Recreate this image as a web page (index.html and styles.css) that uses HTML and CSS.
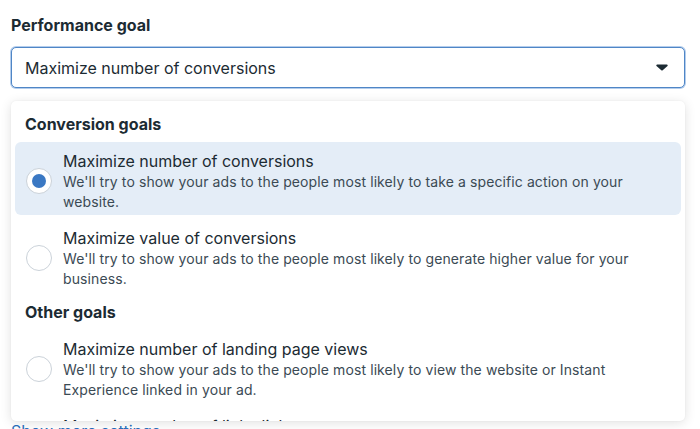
FILE: index.html
```html
<!DOCTYPE html>
<html lang="en">
<head>
<meta charset="utf-8">
<title>Performance goal</title>
<link rel="stylesheet" href="styles.css">
</head>
<body>
<div class="page">
  <div class="label">Performance goal</div>
  <div class="field">
    <div class="select">
      <span class="select-value">Maximize number of conversions</span>
      <svg class="caret" width="12" height="7" viewBox="0 0 12 7"><path d="M1.2 0.5h9.6c0.8 0 1.2 0.9 0.7 1.5L6.7 6.3c-0.4 0.4-1 0.4-1.4 0L0.5 2C0 1.4 0.4 0.5 1.2 0.5z" fill="#1c2b33"/></svg>
    </div>
    <div class="menu">
      <div class="group-title">Conversion goals</div>
      <div class="option selected">
        <span class="radio"><span class="dot"></span></span>
        <div class="option-text">
          <div class="option-title">Maximize number of conversions</div>
          <div class="option-desc">We'll try to show your ads to the people most likely to take a specific action on your website.</div>
        </div>
      </div>
      <div class="option">
        <span class="radio"></span>
        <div class="option-text">
          <div class="option-title">Maximize value of conversions</div>
          <div class="option-desc">We'll try to show your ads to the people most likely to generate higher value for your business.</div>
        </div>
      </div>
      <div class="group-title">Other goals</div>
      <div class="option">
        <span class="radio"></span>
        <div class="option-text">
          <div class="option-title">Maximize number of landing page views</div>
          <div class="option-desc">We'll try to show your ads to the people most likely to view the website or Instant Experience linked in your ad.</div>
        </div>
      </div>
      <div class="option">
        <span class="radio"></span>
        <div class="option-text">
          <div class="option-title">Maximize number of link clicks</div>
          <div class="option-desc">We'll try to show your ads to the people most likely to click on them.</div>
        </div>
      </div>
    </div>
  </div>
  <a class="more" href="#">Show more settings <span class="more-caret">▾</span></a>
</div>
</body>
</html>
```
FILE: styles.css
```css
* { box-sizing: border-box; }
html, body { margin: 0; padding: 0; background: #fff; }
body {
  font-family: Inter, "Noto Sans", sans-serif;
  color: #1c2b33;
  width: 700px;
  height: 429px;
  overflow: hidden;
}
.page {
  padding: 15px 15px 0 11px;
}
.label {
  font-size: 16px;
  font-weight: 700;
  line-height: 20px;
  margin-bottom: 12px;
}
.field {
  position: relative;
  width: 674px;
}
.select {
  height: 41px;
  border: 1px solid #4f86c6;
  box-shadow: 0 0 0 1px #b4cdec;
  border-radius: 5px;
  display: flex;
  align-items: center;
  justify-content: space-between;
  padding: 0 16px 0 13px;
  background: #fff;
}
.select-value {
  font-size: 16px;
  line-height: 20px;
}
.caret { display: block; }
.menu {
  position: absolute;
  top: 54px;
  left: 0;
  width: 674px;
  height: 320px;
  overflow: hidden;
  background: #fff;
  border-radius: 5px;
  box-shadow: 0 2px 12px rgba(0, 0, 0, 0.12), 0 0 2px rgba(0, 0, 0, 0.06);
  padding: 3px 4px 0;
  z-index: 2;
}
.group-title {
  font-size: 16px;
  font-weight: 700;
  line-height: 20px;
  margin: 10px 0 8px 10px;
}
.option {
  display: flex;
  align-items: center;
  gap: 11px;
  padding: 8px 11px 3px;
  border-radius: 6px;
  margin-bottom: 4px;
}
.option.selected { background: #e4edf7; }
.radio {
  flex: none;
  width: 26px;
  height: 26px;
  border-radius: 50%;
  border: 1px solid #cbd2d9;
  background: #fff;
  display: flex;
  align-items: center;
  justify-content: center;
}
.dot {
  width: 14px;
  height: 14px;
  border-radius: 50%;
  background: #3a78c3;
}
.option-title {
  font-size: 16px;
  line-height: 22px;
}
.option-desc {
  font-size: 14px;
  line-height: 20px;
  letter-spacing: 0.1px;
  color: #3b4a54;
}
.more {
  display: inline-block;
  margin-top: 333px;
  font-size: 16px;
  line-height: 20px;
  color: #2a6fbd;
  text-decoration: none;
}
.more-caret { font-size: 13px; }
```
